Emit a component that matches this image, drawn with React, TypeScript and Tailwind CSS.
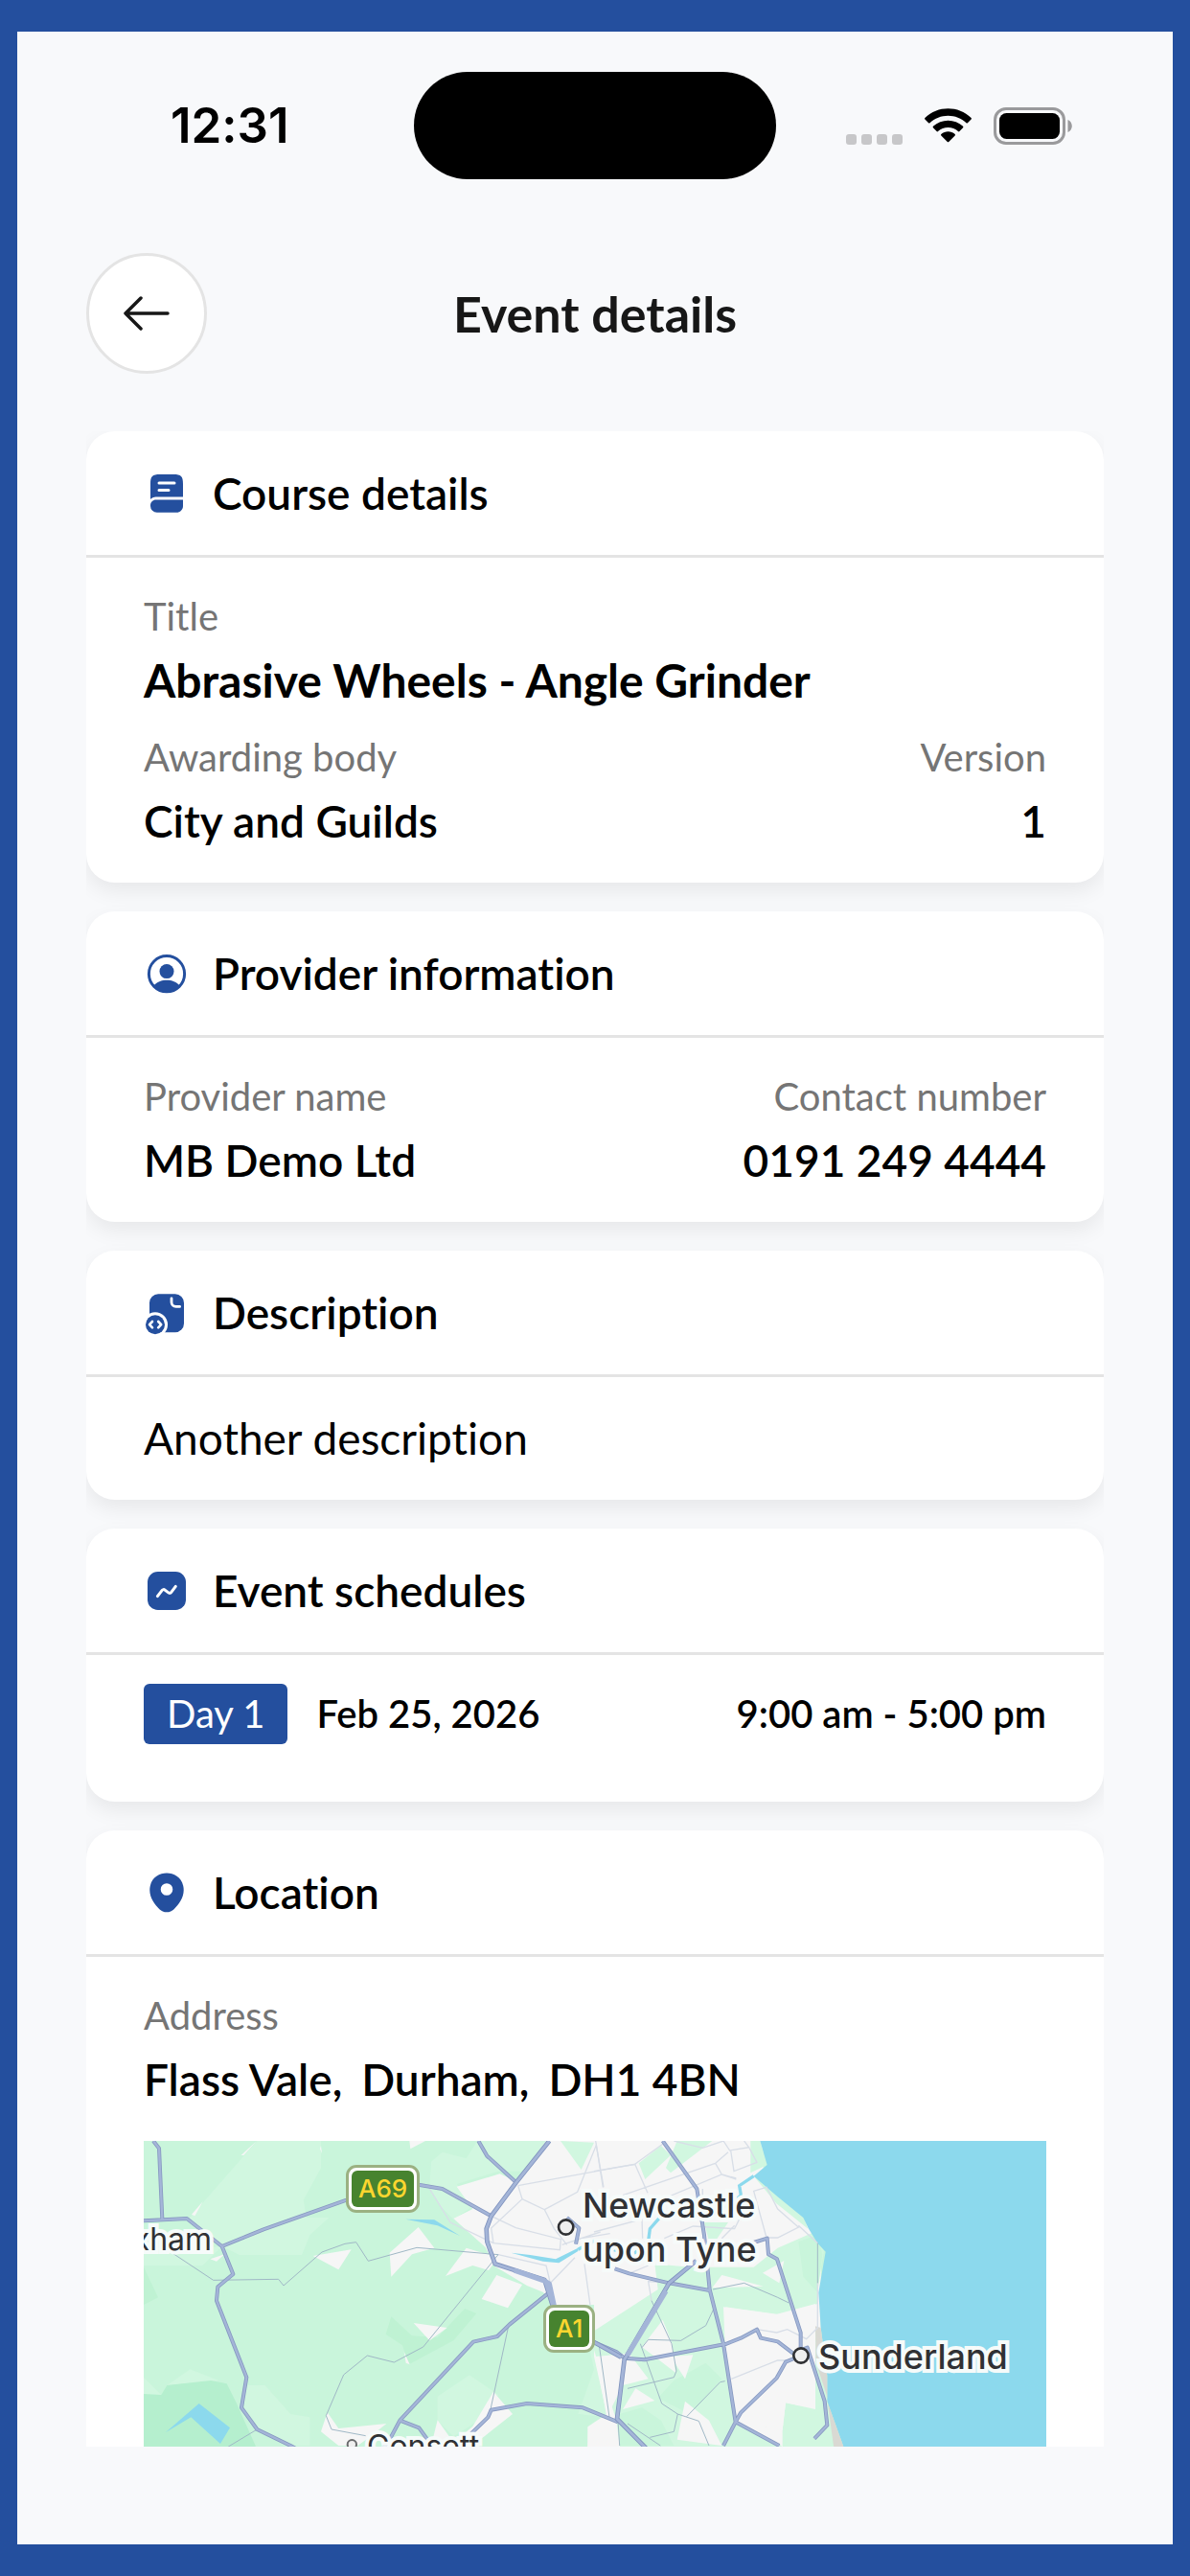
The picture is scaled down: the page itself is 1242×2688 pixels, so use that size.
import type { ReactNode } from 'react'

const BookIcon = () => (
   <svg viewBox="0 0 24 24" className="size-12 shrink-0 text-[#244f9e]" fill="currentColor">
      <path d="M3.5 15V7c0-4 1-5 5-5h7c4 0 5 1 5 5v6.7H6.4c-1.2 0-2.2.5-2.9 1.3Z" />
      <path d="M20.5 15.2v3.3c0 1.9-1.5 3.4-3.4 3.4H6.9a3.4 3.4 0 0 1-3.4-3.4v-.4c0-1.6 1.3-2.9 2.9-2.9h14.1Z" />
      <path d="M8 6.5h8M8 10.2h5" stroke="#fff" strokeWidth="1.5" strokeLinecap="round" />
   </svg>
)

const UserIcon = () => (
   <svg viewBox="0 0 24 24" className="size-12 shrink-0 text-[#244f9e]" fill="currentColor">
      <circle cx="12" cy="12.1" r="9.3" fill="none" stroke="currentColor" strokeWidth="1.5" />
      <circle cx="12" cy="10.8" r="3.75" />
      <path d="M5.2 18.3C6.8 16.3 9.3 15.4 12 15.4s5.2.9 6.8 2.9A9.8 9.8 0 0 1 12 22a9.8 9.8 0 0 1-6.8-3.7Z" />
   </svg>
)

const FileCodeIcon = () => (
   <svg viewBox="0 0 24 24" className="size-12 shrink-0 text-[#244f9e]" fill="currentColor">
      <rect x="3" y="2.1" width="18" height="20" rx="4.6" />
      <path d="M14.5 4.4v2c0 1.3 1 2.3 2.3 2.3h2" fill="none" stroke="#fff" strokeWidth="1.4" strokeLinecap="round" />
      <circle cx="6" cy="18.1" r="6.5" fill="#fff" />
      <circle cx="6" cy="18.1" r="5" />
      <path
         d="m4.5 16.5-1.5 1.6 1.5 1.6M7.6 16.5l1.5 1.6-1.5 1.6"
         fill="none"
         stroke="#fff"
         strokeWidth="1.3"
         strokeLinecap="round"
         strokeLinejoin="round"
      />
   </svg>
)

const ChartIcon = () => (
   <svg viewBox="0 0 24 24" className="size-12 shrink-0 text-[#244f9e]" fill="currentColor">
      <rect x="2" y="2" width="20" height="20" rx="5.4" />
      <path
         d="m7.2 14.8 2.4-3.1c.35-.45 1-.53 1.43-.18l1.85 1.45c.45.35 1.1.27 1.43-.17l2.35-3.1"
         fill="none"
         stroke="#fff"
         strokeWidth="1.5"
         strokeLinecap="round"
         strokeLinejoin="round"
      />
   </svg>
)

const PinIcon = () => (
   <svg viewBox="0 0 24 24" className="size-12 shrink-0 text-[#244f9e]" fill="currentColor">
      <path
         fillRule="evenodd"
         d="M20.6 8.4C19.6 3.8 15.6 1.8 12 1.8S4.4 3.8 3.4 8.4c-1.2 5.2 2 9.5 4.8 12.2a5.4 5.4 0 0 0 7.6 0c2.8-2.7 6-7 4.8-12.2ZM12 13.4a3.15 3.15 0 1 1 0-6.3 3.15 3.15 0 0 1 0 6.3Z"
      />
   </svg>
)

const StatusBar = () => (
   <div className="grid grid-cols-3 items-center px-8 pt-[42px] font-['Inter',sans-serif]">
      <div className="pl-32 text-[51px] leading-[60px] font-semibold text-black">12:31</div>
      <div className="h-28 w-[378px] justify-self-center rounded-full bg-black" />
      <div className="flex items-center justify-end gap-[22px] pr-[73px]">
         <div className="mt-7 flex gap-[5px]">
            <span className="size-[11px] rounded-[3px] bg-[#c7c7c9]" />
            <span className="size-[11px] rounded-[3px] bg-[#c7c7c9]" />
            <span className="size-[11px] rounded-[3px] bg-[#c7c7c9]" />
            <span className="size-[11px] rounded-[3px] bg-[#c7c7c9]" />
         </div>
         <svg viewBox="0 0 51 37" className="h-[37px] w-[51px]" fill="#000">
            <path d="M25.5 7.7c7.1 0 13.9 2.7 19 7.5.4.4 1 .4 1.4 0l3.7-3.8c.4-.4.4-1.1 0-1.5C36.2-3 14.8-3 1.4 9.9c-.4.4-.4 1.1 0 1.5l3.7 3.8c.4.4 1 .4 1.4 0 5.1-4.8 11.9-7.5 19-7.5Z" />
            <path d="M25.5 20c3.9 0 7.7 1.5 10.5 4.1.4.4 1 .4 1.4 0l3.7-3.8c.4-.4.4-1.1 0-1.5-8.7-8.2-22.400-8.200-31.200 0-.4.4-.4 1.1 0 1.5l3.7 3.8c.4.4 1 .4 1.4 0 2.9-2.6 6.6-4.1 10.5-4.1Z" />
            <path d="M32.7 28.4c.4-.4.4-1.1 0-1.5-4.1-3.5-10.2-3.5-14.4 0-.4.4-.4 1.1 0 1.5l6.5 6.6c.4.4 1 .4 1.4 0l6.5-6.6Z" />
         </svg>
         <svg viewBox="0 0 82 39" className="h-[39px] w-[82px]">
            <rect x="1.5" y="1.5" width="72" height="36" rx="11.5" fill="none" stroke="#9a9a9c" strokeWidth="3" />
            <rect x="6" y="6" width="63" height="27" rx="7.5" />
            <path d="M77.5 13v13c2.6-1.1 4.3-3.6 4.3-6.5s-1.7-5.4-4.3-6.5Z" fill="#9a9a9c" />
         </svg>
      </div>
   </div>
)

const Header = () => (
   <header className="grid grid-cols-[126px_1fr_126px] items-center px-18 pt-[77px] pb-15">
      <button
         type="button"
         aria-label="Go back"
         className="flex size-[126px] items-center justify-center rounded-full border-3 border-[#e4e4e4] bg-white"
      >
         <svg
            viewBox="0 0 48 36"
            className="h-9 w-12"
            fill="none"
            stroke="#171717"
            strokeWidth="3.5"
            strokeLinecap="round"
            strokeLinejoin="round"
         >
            <path d="M46 18H2M18 2 2 18l16 16" />
         </svg>
      </button>
      <h1 className="text-center text-[52px] leading-[60px] font-bold text-[#171717]">Event details</h1>
   </header>
)

type CardProps = {
   icon: ReactNode
   title: string
   children: ReactNode
}

const Card = ({ icon, title, children }: CardProps) => (
   <section className="shrink-0 rounded-[30px] bg-white shadow-[0_9px_21px_rgba(0,0,0,0.07)]">
      <div className="flex h-33 items-center gap-6 border-b-3 border-[#e4e4e4] px-15">
         {icon}
         <h2 className="text-[46px] leading-[60px] font-semibold text-black">{title}</h2>
      </div>
      {children}
   </section>
)

type FieldProps = {
   label: string
   children: ReactNode
   right?: boolean
   bold?: boolean
}

const Field = ({ label, children, right, bold }: FieldProps) => (
   <div className={right ? 'text-right' : ''}>
      <dt className="text-[40px] leading-[54px] text-[#757575]">{label}</dt>
      <dd
         className={`mt-2.5 leading-[60px] text-black ${bold ? 'text-[48px] font-bold' : 'text-[46px] font-semibold'}`}
      >
         {children}
      </dd>
   </div>
)

const westRoads =
   'M60 105l18 23 10 222M30 355l135-7 110 87 35 87-48 40-4 43 94 240-16 95 49 68 105 51 110 61M275 435l130-53 260-92 115-50 115 3 70 12 153 85M1078 105l27 47 91 83M1295 583l-120 97-38 37-75 17-230 246-32 60-60 80M832 980l60 23 40 56M1000 1075l108-105 10-23 112-20 175 13 110 45M1355 345l38 33-10 50'
const eastRoads =
   'M215 105l107 150 23 145 17 170 43 170 38 245-38 74M65 505l45 15 125 30 127 23M0 735l70 30 25 20 63 5 257-50 45-18 50-27 12 27 53 11 55 42M500 423l42-13 4 50 27 15 74 230v55M648 777l-48 20-28 50-112 108-17 30 137 74M648 760l20-8 54 168 8 75-40 42'
const trunkRoads =
   'M1300 105l-104 130-78 105-15 40 2 40 25 70 155 50 25 80 50 80 80 35 85 47M1760 480l-85 70-140 240-23 185 83 84 80 80'

const MapArt = () => (
   <svg viewBox="30 105 2826 1440" preserveAspectRatio="xMinYMin slice" className="block size-full" fill="none">
      <rect x="30" y="105" width="2826" height="1440" fill="#c9f5db" />
      {/* fields and parks */}
      <g fill="#d1f7e0">
         <path d="M385 105h200v85l-55 100 10 55h70l-60 55-25 62H330l-55-27-105-85Z" />
         <path d="M925 250l5-80 35-30 75 20 35-55h265v95h-200l-130 40 50 70-60 40-40-40Z" />
         <path d="M950 905l100-67 90 62-30 60-110 70-50-50Z" />
         <path d="M345 870h65l80 90 60 10v89H470L385 1008l-40-60Z" />
         <path d="M30 845l55 55H30ZM103 870l72-50 90 35ZM30 430l80 20 165-15-60 60H30Z" />
         <path d="M1390 960l50-140-40-180 80 30v300Z" />
      </g>
      <path d="M30 500l45 95-45 23ZM1035 630l37 15-72 85-140 75-20-60-52-35 17-55 65 60 80 5Z" fill="#bff2d3" />
      <path d="M30 897l55 3 18-30 137-15 50 10 30 60 60 134 20 486H30Z" fill="#b5efce" />
      {/* built-up areas */}
      <g fill="#f6f6f6">
         <path d="M1290 105h680v100l130 135 50 70v700l80 435h-815l5-545 60-40-40-180v-162h-120l-40-40-50-20-100-60-30-60-100-90 60-30-50-70 135-40 55 25Z" />
         <path d="M560 465l120-20-40 63ZM890 375l50 65-70 20-65 70-5-75ZM1040 440l100 30-30 40-50-15-85 33ZM1135 525l80 30-45 73-82-28Z" />
         <path d="M875 675l105 15-55 40ZM862 105h50l-47 25ZM1125 890l60 70-95 75-80 24h-80l20-80 50 70 60-50ZM605 955l35 50 150-15-50 40-40 29h-60l-55-44Z" />
         <path d="M238 475l45-15-25 22ZM585 120l3 25-6-15ZM845 765l18 40-12-5ZM180 335l35-40-25 45ZM335 150l48-44-40 44Z" />
      </g>
      <g transform="translate(1440)">
         <g fill="#d1f7e0">
            <path d="M-105 105l65 90 40-85ZM0 700l200-130-10-80 110 10h200l75-60 115-50 30 60-20 110v55l-123 33-165-23 5 115 33 245 137 74v486H80V1059l-10-79-70-220Z" />
            <path d="M140 175l70-55 30 30-80 75ZM260 105h110L240 205l-15-15ZM490 105h30l22 75-52 25ZM500 215l80 60 75 65 15 40-100-80ZM345 360h75l-55 80Z" />
            <path d="M590 1010l10-85 93 20V690h12l25 210 20 159 100 486H590Z" />
         </g>
         <path
            d="M250 855l100-55 50 50-100 110-100-50ZM80 960l70-20 60 40 40 79H80ZM640 420l60-20 15 60-15 120-45-50Z"
            fill="#c9f5db"
         />
         <g fill="#f6f6f6">
            <path d="M400 525l130 35-160 5ZM595 480l-15 70-52-32ZM215 665l30 75 10 90-105-80ZM240 780l70-5-25 75ZM5 780l105-10 60 80-80 20-50 100ZM130 880l60 38-100 27ZM285 920l75 60 40 79-140-19Z" />
            <path d="M405 625l165 23 123-33v327l-93-17-10 85-145-30-35-240Z" />
         </g>
         <path
            d="M520 105l22 75-42 35 75 65 80 65 17 35 28 45 25 27-22 128 7 110 20 150v80l50 139 120 486h516V105Z"
            fill="#8cd9ed"
         />
         <path d="M693 685l17 5 20 150v80l50 139 120 486h-50L750 1059 728 900l-33-100Z" fill="#d9d9d3" />
      </g>
      {/* water */}
      <path
         d="M850 350l90 2 80 50-70-32ZM98 1018l105-91 97 76-30 50-92-83ZM1180 455l60 7 80 13 70-35v10l-60 37-50-5Z"
         fill="#8cd9ed"
      />
      <path
         d="M1390 445l50-27 45 25 80 15 45-40 5-38 35-40 90-15 120-15 40-35-5-30 45-30"
         stroke="#8cd9ed"
         strokeWidth="10"
      />
      {/* minor streets */}
      <g stroke="#d8dee7" strokeWidth="4">
         <path d="M925 255l65 105 135 65 208 21 3-33-141-36-77-37M1202 245l298-55 70-12M1202 245l13 42-97 91 7 47M1215 287l70 33 30 60 40 50M1285 320l103-55 59-147 23 132M1140 461l150 34 13 55 77-80M1410 490l18 130M1340 430l120-40M1400 410l90-15" />
         <path
            transform="translate(1440)"
            d="M0 200l128-22 40 90M128 178l87-63M90 275l290-100 20 35 45 12M220 285l180-75 45 15M250 105l90 22 65-22 20 30 60-10-15-20M485 125l25 47-72 28-10-65M380 175l40-35M0 390l150-40 2 60M220 410l90-38 130 8 15-30M500 262l40-12 35 68 65 57-65 33h-35ZM640 370l60 55M430 850l145-58h45M510 695l62 10 33-10 60 30 35-35V550M5 105l23 145M180 605l-10-60 65 5M400 410l40-40M110 520l60-25M340 255v60"
         />
      </g>
      <g stroke="#a0b8c6" strokeWidth="3">
         <path d="M100 443l148 98 204-3 16 20 120-105 72-26 35-5 38 59 152-42 255 22-235 289-91 48-84-21-74 60-55 128 17 43 107 20M1172 685l-56 260M385 1008l-85 51-100 70M1456 745l32 225" />
         <path
            transform="translate(1440)"
            d="M180 605l63 135 15 85-8 20-145 35M375 630l-25 53-78 47-102-3-20 25M145 740l67 187 50 33 66 22 32 77M262 960l-12 55-75 18M290 968l105-108 15-3M372 570l98-20 105 45 35 17M75 980l5 79M105 990l103 69M700 425v125"
         />
      </g>
      {/* A roads: dark casing first, lighter fill on top */}
      <g strokeLinejoin="round">
         <g stroke="#8799c1" strokeWidth="12">
            <path d={westRoads} />
            <path d={eastRoads} transform="translate(1440)" />
         </g>
         <g stroke="#a4b5d8" strokeWidth="7">
            <path d={westRoads} />
            <path d={eastRoads} transform="translate(1440)" />
         </g>
         <path d={trunkRoads} stroke="#7f92bd" strokeWidth="14" />
         <path d={trunkRoads} stroke="#a4b5d8" strokeWidth="9" />
         <path d="M1190 510l95 33 15 10 15 70M1665 575l-120 200" stroke="#a4b5d8" strokeWidth="16" />
      </g>
      <g fill="#efefef" stroke="#303134" strokeWidth="8">
         <circle cx="1352" cy="375" r="23" />
         <circle cx="2088" cy="777" r="23" />
         <circle cx="682" cy="1055" r="14" stroke="#6a6b6d" strokeWidth="6" />
      </g>
   </svg>
)

const placeClass = 'absolute whitespace-nowrap text-[#303134] [-webkit-text-stroke:8px_#f6fbfa] [paint-order:stroke_fill]'
const shieldClass =
   'absolute rounded-[11px] border-3 border-[#9bb182] bg-white p-[3px] text-[26px] leading-[38px] font-medium text-[#fcd62f]'

const LocationMap = () => (
   <div className="relative h-[480px] overflow-hidden font-['Inter',sans-serif]">
      <MapArt />
      <span className={`${placeClass} -left-[53px] top-20 text-[32px] leading-[46px]`}>Hexham</span>
      <span className={`${placeClass} left-[458px] top-11 text-[36px] leading-[46px] font-medium`}>
         Newcastle
         <br />
         upon Tyne
      </span>
      <span className={`${placeClass} left-[704px] top-[202px] text-[36px] leading-[46px] font-medium`}>Sunderland</span>
      <span className={`${placeClass} left-[233px] top-[296px] text-[32px] leading-[46px]`}>Consett</span>
      <div className={`${shieldClass} left-[211px] top-[25px]`}>
         <div className="rounded-md bg-[#47832f] px-[7px]">A69</div>
      </div>
      <div className={`${shieldClass} left-[417px] top-[171px]`}>
         <div className="rounded-md bg-[#47832f] px-[7px]">A1</div>
      </div>
   </div>
)

const App = () => {
   return (
      <div className="h-screen bg-[#244f9e] px-[18px] py-[33px] font-['Lato',sans-serif] [font-variant-ligatures:none]">
         <div className="flex h-full flex-col bg-[#f8f9fb] pb-[102px]">
            <StatusBar />
            <Header />
            <main className="mx-18 flex min-h-0 flex-1 flex-col gap-[30px] overflow-y-auto [scrollbar-width:none]">
               <Card icon={<BookIcon />} title="Course details">
                  <dl className="flex flex-col gap-[23px] px-15 py-[34px]">
                     <Field label="Title" bold>
                        Abrasive Wheels - Angle Grinder
                     </Field>
                     <div className="flex justify-between">
                        <Field label="Awarding body">City and Guilds</Field>
                        <Field label="Version" right>
                           1
                        </Field>
                     </div>
                  </dl>
               </Card>

               <Card icon={<UserIcon />} title="Provider information">
                  <dl className="flex justify-between px-15 py-[34px]">
                     <Field label="Provider name">MB Demo Ltd</Field>
                     <Field label="Contact number" right>
                        0191 249 4444
                     </Field>
                  </dl>
               </Card>

               <Card icon={<FileCodeIcon />} title="Description">
                  <p className="px-15 py-[34px] text-[46px] leading-[60px] text-black">Another description</p>
               </Card>

               <Card icon={<ChartIcon />} title="Event schedules">
                  <div className="flex items-center px-15 pt-[30px] pb-15 text-[40px] leading-[55px] font-semibold text-black">
                     <span className="mr-[30px] rounded-md bg-[#244f9e] px-6 py-1 font-normal text-white">Day 1</span>
                     <span>Feb 25, 2026</span>
                     <span className="ml-auto">9:00 am - 5:00 pm</span>
                  </div>
               </Card>

               <Card icon={<PinIcon />} title="Location">
                  <div className="px-15 py-[34px]">
                     <dl className="mb-[34px]">
                        <Field label="Address">
                           <span className="flex gap-5">
                              <span>Flass Vale,</span>
                              <span>Durham,</span>
                              <span>DH1 4BN</span>
                           </span>
                        </Field>
                     </dl>
                     <LocationMap />
                  </div>
               </Card>
            </main>
         </div>
      </div>
   )
}

export default App
